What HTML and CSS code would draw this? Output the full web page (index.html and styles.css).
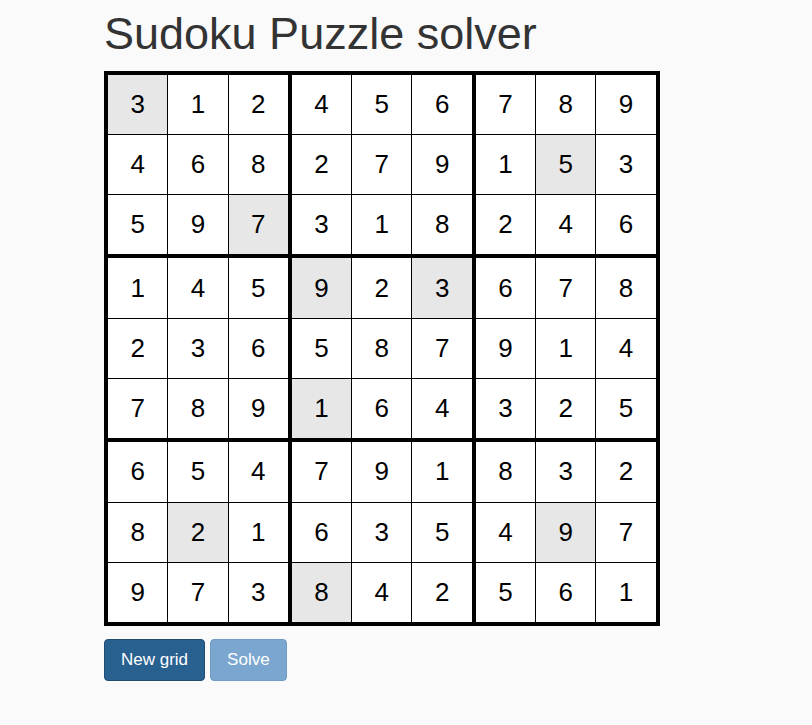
FILE: index.html
```html
<!DOCTYPE html>
<html lang="en">
<head>
<meta charset="utf-8">
<title>Sudoku Puzzle solver</title>
<link rel="stylesheet" href="styles.css">
</head>
<body>
<div class="container">
  <h1 class="title">Sudoku Puzzle solver</h1>
  <div class="board">
    <div class="box">
      <div class="cell given">3</div><div class="cell">1</div><div class="cell">2</div>
      <div class="cell">4</div><div class="cell">6</div><div class="cell">8</div>
      <div class="cell">5</div><div class="cell">9</div><div class="cell given">7</div>
    </div>
    <div class="box">
      <div class="cell">4</div><div class="cell">5</div><div class="cell">6</div>
      <div class="cell">2</div><div class="cell">7</div><div class="cell">9</div>
      <div class="cell">3</div><div class="cell">1</div><div class="cell">8</div>
    </div>
    <div class="box">
      <div class="cell">7</div><div class="cell">8</div><div class="cell">9</div>
      <div class="cell">1</div><div class="cell given">5</div><div class="cell">3</div>
      <div class="cell">2</div><div class="cell">4</div><div class="cell">6</div>
    </div>
    <div class="box">
      <div class="cell">1</div><div class="cell">4</div><div class="cell">5</div>
      <div class="cell">2</div><div class="cell">3</div><div class="cell">6</div>
      <div class="cell">7</div><div class="cell">8</div><div class="cell">9</div>
    </div>
    <div class="box">
      <div class="cell given">9</div><div class="cell">2</div><div class="cell given">3</div>
      <div class="cell">5</div><div class="cell">8</div><div class="cell">7</div>
      <div class="cell given">1</div><div class="cell">6</div><div class="cell">4</div>
    </div>
    <div class="box">
      <div class="cell">6</div><div class="cell">7</div><div class="cell">8</div>
      <div class="cell">9</div><div class="cell">1</div><div class="cell">4</div>
      <div class="cell">3</div><div class="cell">2</div><div class="cell">5</div>
    </div>
    <div class="box">
      <div class="cell">6</div><div class="cell">5</div><div class="cell">4</div>
      <div class="cell">8</div><div class="cell given">2</div><div class="cell">1</div>
      <div class="cell">9</div><div class="cell">7</div><div class="cell">3</div>
    </div>
    <div class="box">
      <div class="cell">7</div><div class="cell">9</div><div class="cell">1</div>
      <div class="cell">6</div><div class="cell">3</div><div class="cell">5</div>
      <div class="cell given">8</div><div class="cell">4</div><div class="cell">2</div>
    </div>
    <div class="box">
      <div class="cell">8</div><div class="cell">3</div><div class="cell">2</div>
      <div class="cell">4</div><div class="cell given">9</div><div class="cell">7</div>
      <div class="cell">5</div><div class="cell">6</div><div class="cell">1</div>
    </div>
  </div>
  <div class="actions">
    <button class="btn btn-dark" type="button">New grid</button>
    <button class="btn btn-light" type="button" disabled>Solve</button>
  </div>
</div>
</body>
</html>
```

FILE: styles.css
```css
html, body {
  margin: 0;
  padding: 0;
  background: #fafafa;
}

body {
  font-family: "Liberation Sans", Arial, Helvetica, sans-serif;
  color: #333;
}

.container {
  padding-left: 104px;
}

.title {
  margin: 9px 0 12px;
  font-size: 45px;
  font-weight: 400;
  line-height: 1.1;
  color: #333;
}

.board {
  display: inline-grid;
  grid-template-columns: repeat(3, auto);
  gap: 4px;
  padding: 4px;
  background: #000;
}

.box {
  display: grid;
  grid-template-columns: repeat(3, 59.3px);
  grid-auto-rows: 59.3px;
  gap: 1px;
  background: #000;
}

.cell {
  display: flex;
  align-items: center;
  justify-content: center;
  background: #fff;
  color: #000;
  font-size: 26px;
}

.cell.given {
  background: #e7e7e7;
}

.actions {
  display: flex;
  gap: 5px;
  margin-top: 13px;
}

.btn {
  font-family: "Liberation Sans", Arial, Helvetica, sans-serif;
  font-size: 17px;
  line-height: 20px;
  padding: 10px 16px;
  border-radius: 4px;
  color: #fff;
  border: 1px solid transparent;
  cursor: pointer;
}

.btn-dark {
  background: #286090;
  border-color: #204d74;
}

.btn-light {
  background: #7aa6d0;
  border-color: #6f9dc7;
  cursor: not-allowed;
}
```
